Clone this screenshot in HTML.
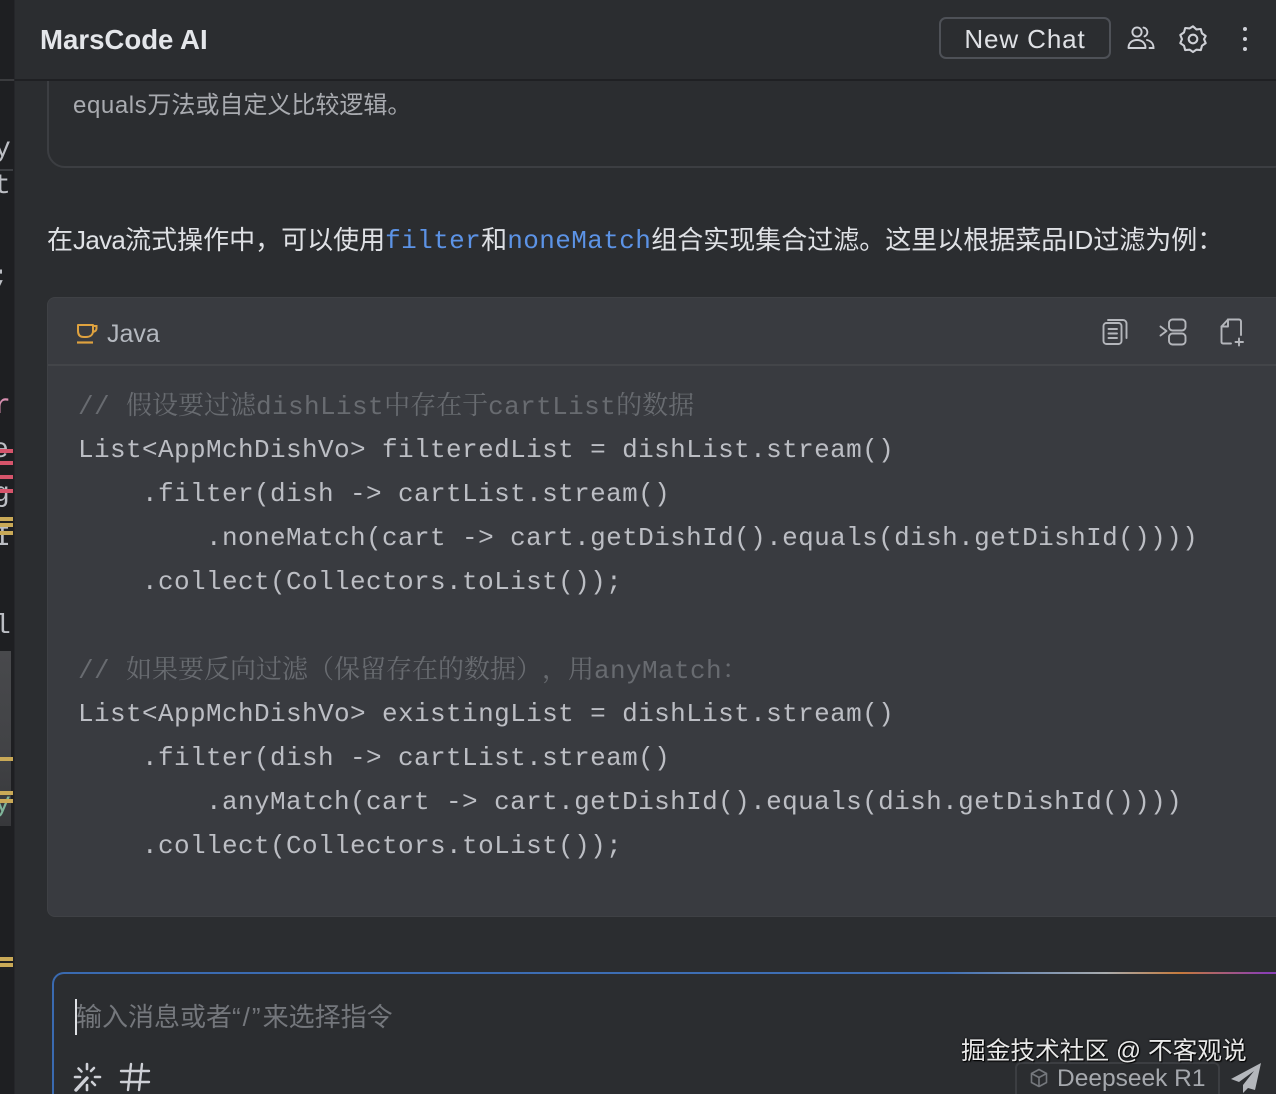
<!DOCTYPE html>
<html lang="zh">
<head>
<meta charset="utf-8">
<title>MarsCode AI</title>
<style>
html,body{margin:0;padding:0;background:#2b2d30;}
#page{position:relative;width:1276px;height:1094px;overflow:hidden;background:#2b2d30;font-family:"Liberation Sans","Noto Sans CJK SC",sans-serif;color:#dfe1e5;text-spacing-trim:space-all;}
.abs{position:absolute;white-space:pre;}
.code{position:absolute;left:78px;white-space:pre;font-family:"Liberation Mono","Noto Sans CJK SC",monospace;font-size:26px;letter-spacing:.4px;line-height:44px;height:44px;color:#bcbec4;}
.code.c{color:#686b70;}
.code.c i{font-style:normal;font-family:"Noto Serif CJK SC",serif;font-size:26px;letter-spacing:0;}
.m{font-family:"Liberation Mono",monospace;font-size:26px;letter-spacing:.4px;color:#5c93e6;position:relative;top:-1px;}
svg{position:absolute;overflow:visible;fill:none;}
.bar{position:absolute;left:0;width:13px;height:4px;}
.g{position:absolute;font:28px/32px "Liberation Mono",monospace;color:#bcbec4;}
</style>
</head>
<body>
<div id="page">
  <!-- left editor strip -->
  <div class="abs" style="left:0;top:0;width:14px;height:1094px;background:#1e1f22;"></div>
  <div class="abs" style="left:14px;top:0;width:1px;height:1094px;background:#25262a;"></div>
  <div class="abs" style="left:0;top:651px;width:11px;height:175px;background:linear-gradient(#48494c 0%,#424346 55%,#37383b 100%);"></div>
  <div class="abs" style="left:0;top:79px;width:14px;height:2px;background:#3a3b3e;"></div>
  <div class="abs" style="left:0;top:169px;width:13px;height:2px;background:#3c3e42;"></div>
  <div class="g" style="left:-6px;top:134px;">y</div>
  <div class="g" style="left:-6px;top:171px;">t</div>
  <div class="g" style="left:-8px;top:262px;">;</div>
  <div class="g" style="left:-6px;top:391px;color:#d78fb0;">r</div>
  <div class="g" style="left:-8px;top:435px;">e</div>
  <div class="g" style="left:-7px;top:479px;">g</div>
  <div class="g" style="left:-6px;top:523px;">I</div>
  <div class="g" style="left:-6px;top:611px;">l</div>
  <div class="g" style="left:-6px;top:789px;color:#7fb59a;">y</div>
  <div class="bar" style="top:449px;background:#d6546b;"></div>
  <div class="bar" style="top:461px;background:#d6546b;"></div>
  <div class="bar" style="top:475px;background:#d6546b;"></div>
  <div class="bar" style="top:489px;background:#d6546b;"></div>
  <div class="bar" style="top:517px;background:#c9a957;"></div>
  <div class="bar" style="top:523px;background:#c9a957;"></div>
  <div class="bar" style="top:531px;background:#c9a957;"></div>
  <div class="bar" style="top:757px;background:#c9a957;"></div>
  <div class="bar" style="top:791px;background:#c9a957;"></div>
  <div class="bar" style="top:799px;background:#c9a957;"></div>
  <div class="bar" style="top:957px;background:#c9a957;"></div>
  <div class="bar" style="top:963px;background:#c9a957;"></div>

  <!-- top card remnant -->
  <div class="abs" style="left:47px;top:60px;width:1240px;height:104px;border:2px solid #3c3e42;border-radius:18px;"></div>
  <div class="abs" style="left:73px;top:91px;font-size:24px;line-height:30px;color:#a9abb0;"><span style="letter-spacing:.6px;">equals</span>万法或自定义比较逻辑。</div>

  <!-- header -->
  <div class="abs" style="left:15px;top:0;width:1261px;height:79px;background:#2b2d30;"></div>
  <div class="abs" style="left:15px;top:79px;width:1261px;height:2px;background:#1f2023;"></div>
  <div class="abs" style="left:40px;top:24px;font-size:27.600px;line-height:32px;font-weight:bold;color:#e4e6ea;">MarsCode AI</div>
  <div class="abs" style="left:939px;top:17px;width:168px;height:38px;border:2px solid #4e5157;border-radius:7px;text-align:center;font-size:26px;line-height:40px;color:#dfe1e5;letter-spacing:.9px;">New Chat</div>
  <svg style="left:1127px;top:25px" width="28" height="26" viewBox="0 0 28 26" stroke="#ced0d6" stroke-width="1.9" stroke-linecap="round">
    <circle cx="10" cy="7" r="4.6"/>
    <path d="M1.5 23c0-5 3.6-8 8.5-8s8.5 3 8.5 8z" stroke-linejoin="round"/>
    <path d="M16.5 2.6a4.6 4.6 0 0 1 1 8.8M20 15c3.700.8 6.500 3.500 6.500 8h-4"/>
  </svg>
  <svg style="left:1179px;top:25px" width="28" height="28" viewBox="0 0 28 28" stroke="#ced0d6" stroke-width="2.100" stroke-linejoin="round">
    <path d="M14 1.300l3.300 3.100 4.500-.4 1.200 4.400 3.700 2.600L25 14.100l1.700 4-3.700 2.600-1.200 4.400-4.500-.4L14 27l-3.300-2.300-4.500.4L5 20.700l-3.700-2.600L3 14.100 1.300 10l3.700-2.600L6.200 3l4.500.4z"/>
    <circle cx="14" cy="14" r="4.300"/>
  </svg>
  <div class="abs" style="left:1243px;top:27px;width:4px;height:4px;border-radius:2px;background:#ced0d6;"></div>
  <div class="abs" style="left:1243px;top:37px;width:4px;height:4px;border-radius:2px;background:#ced0d6;"></div>
  <div class="abs" style="left:1243px;top:47px;width:4px;height:4px;border-radius:2px;background:#ced0d6;"></div>

  <!-- paragraph -->
  <div class="abs" style="left:47px;top:222px;font-size:26px;line-height:36px;color:#dfe1e5;">在<span style="letter-spacing:-.7px;">Java</span>流式操作中，可以使用<span class="m">filter</span>和<span class="m">noneMatch</span>组合实现集合过滤。这里以根据菜品ID过滤为例：</div>

  <!-- code block -->
  <div class="abs" style="left:47px;top:297px;width:1240px;height:620px;background:#393b40;border:1px solid #3f4145;border-radius:8px;box-sizing:border-box;"></div>
  <div class="abs" style="left:48px;top:364px;width:1228px;height:2px;background:#434549;"></div>

  <svg style="left:76px;top:323px" width="22" height="22" viewBox="0 0 22 22" stroke="#dfa23f" stroke-width="2">
    <path d="M2 2h15v6c0 4-3 6-7 6H8c-4 0-6-2-6-6z" stroke-linejoin="round"/>
    <path d="M17 3h3.500v2.500c0 2-1.500 3-3.500 3.500"/>
    <path d="M1 19.500h16" stroke-width="2.200"/>
  </svg>
  <div class="abs" style="left:107px;top:318px;font-size:25px;line-height:32px;color:#b4b8bf;">Java</div>

  <svg style="left:1102px;top:318px" width="26" height="28" viewBox="0 0 26 28" stroke="#b4b6bb" stroke-width="1.900" stroke-linecap="round" stroke-linejoin="round">
    <rect x="1.500" y="5" width="18" height="21" rx="3"/>
    <path d="M6 2h15a3.500 3.500 0 0 1 3.500 3.500V20"/>
    <path d="M6.500 11h8.500M6.500 15.500h8.500M6.500 20h8.500"/>
  </svg>
  <svg style="left:1159px;top:318px" width="28" height="28" viewBox="0 0 28 28" stroke="#b4b6bb" stroke-width="1.900" stroke-linecap="round" stroke-linejoin="round">
    <rect x="10" y="1.500" width="16.500" height="11" rx="3.500"/>
    <rect x="10" y="15.500" width="16.500" height="11" rx="3.500"/>
    <path d="M1.500 8.500l6 4.500-6 4.500"/>
  </svg>
  <svg style="left:1220px;top:318px" width="26" height="28" viewBox="0 0 26 28" stroke="#b4b6bb" stroke-width="1.900" stroke-linecap="round" stroke-linejoin="round">
    <path d="M8 1.500h11a2 2 0 0 1 2 2V17"/>
    <path d="M8 1.500L1.500 8.500V24a1.500 1.500 0 0 0 1.500 1.500h8"/>
    <path d="M8 1.500v7H1.500"/>
    <path d="M19 20.500v7M15.500 24h7.500"/>
  </svg>

  <div class="code c" style="top:382px;">// <i>假设要过滤</i>dishList<i>中存在于</i>cartList<i>的数据</i></div>
  <div class="code" style="top:428px;">List&lt;AppMchDishVo&gt; filteredList = dishList.stream()</div>
  <div class="code" style="top:472px;">    .filter(dish -&gt; cartList.stream()</div>
  <div class="code" style="top:516px;">        .noneMatch(cart -&gt; cart.getDishId().equals(dish.getDishId())))</div>
  <div class="code" style="top:560px;">    .collect(Collectors.toList());</div>
  <div class="code c" style="top:646px;">// <i>如果要反向过滤（保留存在的数据），用</i>anyMatch<i>：</i></div>
  <div class="code" style="top:692px;">List&lt;AppMchDishVo&gt; existingList = dishList.stream()</div>
  <div class="code" style="top:736px;">    .filter(dish -&gt; cartList.stream()</div>
  <div class="code" style="top:780px;">        .anyMatch(cart -&gt; cart.getDishId().equals(dish.getDishId())))</div>
  <div class="code" style="top:824px;">    .collect(Collectors.toList());</div>

  <!-- input box -->
  <div style="position:absolute;left:52px;top:972px;width:1240px;height:140px;box-sizing:border-box;border-radius:12px;padding:2px;background:linear-gradient(90deg,#3a6ab0 0%,#3f6fb5 72%,#a9acae 85%,#c57a3c 91%,#8a3fb5 98%);"><div style="width:100%;height:100%;background:#2b2d30;border-radius:10px;"></div></div>
  <div class="abs" style="left:75px;top:999px;width:2px;height:36px;background:#dfe1e5;"></div>
  <div class="abs" style="left:76px;top:999px;font-size:26px;line-height:36px;color:#74777c;">输入消息或者<span style="letter-spacing:2px;">“/”</span>来选择指令</div>

  <svg style="left:73px;top:1062px" width="30" height="30" viewBox="0 0 30 30" stroke="#ced0d6" stroke-width="2.600" stroke-linecap="round">
    <path d="M14 2v5M14 23v5M2 15h5M22 15h5M5.500 6.500l3 3M21 6l-3 3M22 23l-3-3"/>
    <path d="M3 28L14 16" stroke-width="3.400"/>
  </svg>
  <svg style="left:120px;top:1062px" width="30" height="32" viewBox="0 0 30 32" stroke="#ced0d6" stroke-width="2.400" stroke-linecap="round">
    <path d="M1 9h28M1 20h28M11 2L8 28M22 2l-3 26"/>
  </svg>

  <div class="abs" style="left:1015px;top:1062px;width:205px;height:40px;border:2px solid #3c3e42;border-radius:6px;box-sizing:border-box;"></div>
  <svg style="left:1030px;top:1068px" width="18" height="20" viewBox="0 0 18 20" stroke="#74777c" stroke-width="1.600" stroke-linejoin="round">
    <path d="M9 1.500l7.500 4v9L9 18.500l-7.500-4v-9zM1.500 5.500L9 9.500l7.500-4M9 9.500v9"/>
  </svg>
  <div class="abs" style="left:1057px;top:1063px;font-size:24.500px;line-height:32px;color:#a5a8ad;">Deepseek R1</div>
  <svg style="left:1230px;top:1062px" width="32" height="32" viewBox="0 0 32 32">
    <path d="M31 1L1 17l8 3 15-11-11 14v8l5-5 7 2z" fill="#b4b7bc"/>
  </svg>

  <div class="abs" style="left:961px;top:1035px;font-size:24.700px;line-height:34px;color:#e8e8e8;text-shadow:0 0 2px #000,1px 1px 1px #000;">掘金技术社区 @ 不客观说</div>
</div>
</body>
</html>
